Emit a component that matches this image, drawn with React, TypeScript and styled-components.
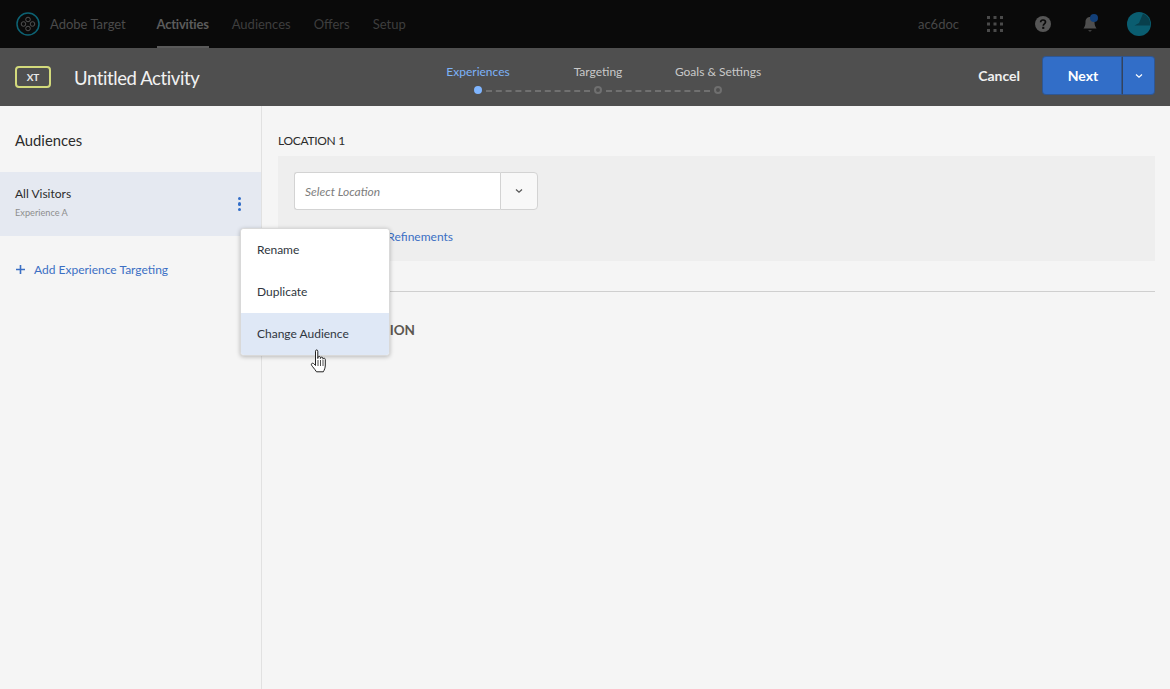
import React from "react";
import styled, { createGlobalStyle } from "styled-components";

const Global = createGlobalStyle`
  html, body { margin: 0; padding: 0; height: 100%; background: #f5f5f5; }
  body { font-family: "Lato", "Open Sans", "Liberation Sans", sans-serif; overflow: hidden; }
  * { box-sizing: border-box; }
`;

const Page = styled.div`
  width: 1170px; height: 689px; display: flex; flex-direction: column; position: relative; overflow: hidden; background: #f5f5f5;
`;
const TopNav = styled.header`
  height: 48px; background: #0a0a0a; display: flex; align-items: stretch; padding-left: 16px; flex: none;
`;
const Brand = styled.div`
  display: flex; align-items: center; gap: 10px; font-size: 13px; color: #4b4b4b; width: 140.500px;
`;
const NavItem = styled.div<{ $active?: boolean }>`
  display: flex; align-items: center; font-size: 13px; height: 48px;
  margin-right: 23px; padding-top: 1px;
  font-weight: ${p => (p.$active ? 700 : 400)};
  letter-spacing: ${p => (p.$active ? "-0.2px" : "0")};
  color: ${p => (p.$active ? "#5c5c5c" : "#3e3e3e")};
  border-bottom: 2px solid ${p => (p.$active ? "#5a5a5a" : "transparent")};
`;
const NavRight = styled.div`
  margin-left: auto; display: flex; align-items: center; padding-right: 19px;
`;
const OrgName = styled.span`
  font-size: 13px; color: #474747; margin-right: 28px;
`;
const IconBox = styled.span<{ $mr: number }>`
  display: flex; margin-right: ${p => p.$mr}px;
`;
const ActionBar = styled.div`
  height: 58px; background: #4f4f4f; display: flex; align-items: center; padding: 0 15px; position: relative; flex: none;
`;
const TypeBadge = styled.div`
  width: 36px; height: 22px; border: 2px solid #d3da7c; border-radius: 4px; font-size: 10px; font-weight: 700;
  color: #e8e8e8; display: flex; align-items: center; justify-content: center; margin-right: 23px;
`;
const Title = styled.div`
  font-size: 18.500px; letter-spacing: -0.400px; color: #f2f2f2; padding-top: 2px;
`;
const Steps = styled.div`
  position: absolute; left: 418px; top: 15px; display: grid; grid-template-columns: repeat(3, 120px);
`;
const Step = styled.div<{ $active?: boolean }>`
  display: flex; flex-direction: column; align-items: center; position: relative;
  font-size: 12px; line-height: 18px;
  color: ${p => (p.$active ? "#7db2f8" : "#c9c9c9")};
`;
const Dot = styled.i<{ $active?: boolean }>`
  display: block; width: 8px; height: 8px; border-radius: 50%; margin-top: 5px;
  background: ${p => (p.$active ? "#7fb5ff" : "transparent")};
  border: 2px solid ${p => (p.$active ? "#7fb5ff" : "#6f6f6f")};
`;
const Dash = styled.i`
  position: absolute; left: 68px; top: 27px; width: 104px; height: 0; border-top: 2px dashed #707070;
`;
const Actions = styled.div`
  margin-left: auto; display: flex; align-items: center; padding-bottom: 3px;
`;
const Cancel = styled.span`
  font-size: 14px; font-weight: 700; color: #f0f0f0; margin-right: 22px;
`;
const NextBtn = styled.div`
  width: 80px; height: 39px; background: #326ec8; border: 1px solid #2a2a2a55; border-radius: 4px 0 0 4px; color: #fff;
  font-size: 14px; font-weight: 700; display: flex; align-items: center; justify-content: center; padding-left: 2px;
`;
const NextCaret = styled.div`
  width: 33px; height: 39px; background: #326ec8; border: 1px solid #2a2a2a55; border-left: 1px solid #34435c;
  border-radius: 0 4px 4px 0; display: flex; align-items: center; justify-content: center;
`;
const Body = styled.div`
  flex: 1; display: flex; min-height: 0;
`;
const Sidebar = styled.aside`
  width: 262px; border-right: 1px solid #e1e1e1; flex: none; padding-top: 25px;
`;
const SideTitle = styled.div`
  font-size: 14.800px; color: #2c2c2c; padding-left: 15px; line-height: 18px; margin-bottom: 23px;
`;
const AudienceRow = styled.div`
  height: 64px; background: #e5e9f1; padding: 13px 15px 0; position: relative; display: flex; justify-content: space-between;
`;
const AudienceName = styled.div`
  font-size: 12px; color: #2c2c2c; line-height: 17px;
`;
const AudienceSub = styled.div`
  font-size: 9.200px; color: #8e8e8e; line-height: 14px; margin-top: 4px;
`;
const Kebab = styled.span`
  margin: 12px 4px 0 0; width: 4px; display: flex; flex-direction: column; gap: 2px;
  i { display: block; width: 3.400px; height: 3.400px; border-radius: 50%; background: #326ec8; }
`;
const AddTarget = styled.div`
  display: flex; align-items: center; gap: 9px; padding: 25px 0 0 16px; font-size: 12px; color: #3b6fc4; line-height: 17px;
`;
const Main = styled.main`
  flex: 1; padding: 26px 15px 0 16px;
`;
const SectionLabel = styled.div`
  font-size: 12px; letter-spacing: -0.300px; color: #2c2c2c; line-height: 17px;
`;
const LocationCard = styled.div`
  background: #eeeeee; height: 105px; margin-top: 7px; padding: 16px;
`;
const SelectRow = styled.div`
  display: flex; width: 244px; height: 38px;
`;
const SelectInput = styled.div`
  flex: 1; background: #fff; border: 1px solid #d3d3d3; border-right: 0; border-radius: 3px 0 0 3px; font-size: 12px; font-style: italic;
  color: #7d7d7d; display: flex; align-items: center; padding-left: 10px;
`;
const SelectCaret = styled.div`
  width: 38px; background: #f8f8f8; border: 1px solid #d3d3d3; border-radius: 0 4px 4px 0; display: flex; align-items: center; justify-content: center;
`;
const RefineLink = styled.div`
  font-size: 12px; color: #3b6fc4; line-height: 17px; margin: 18px 0 0 -16px; text-align: right; width: 175px;
`;
const Rule = styled.hr`
  border: 0; border-top: 1px solid #cfcfcf; margin: 30px 0 0;
`;
const AddLocation = styled.div`
  font-size: 13.500px; font-weight: 700; color: #5c5851; margin-top: 29px; line-height: 18px; display: flex; justify-content: flex-end; width: 137px;
`;
const Menu = styled.div`
  position: absolute; left: 240px; top: 228px; width: 150px; height: 128px; background: #fff; border: 1px solid #d9d9d9;
  border-radius: 4px; box-shadow: 0 1px 4px rgba(0,0,0,0.25); overflow: hidden;
`;
const MenuItem = styled.div<{ $hover?: boolean }>`
  height: 42px; display: flex; align-items: center; padding-left: 16px; padding-bottom: 1px; font-size: 12px; color: #2f3640;
  background: ${p => (p.$hover ? "#dfe8f6" : "#fff")};
`;
const Cursor = styled.svg`
  position: absolute; left: 310px; top: 349px;
`;

const Logo = () => (
  <svg width="24" height="24" viewBox="0 0 24 24" fill="none">
    <circle cx="12" cy="12" r="11" stroke="#0d6273" strokeWidth="1.500" />
    <g stroke="#5a5a5a" strokeWidth="0.900">
      <circle cx="12" cy="7.500" r="2.300" />
      <circle cx="12" cy="16.500" r="2.300" />
      <circle cx="7.500" cy="12" r="2.300" />
      <circle cx="16.500" cy="12" r="2.300" />
    </g>
  </svg>
);
const Grid = () => (
  <svg width="16" height="16" viewBox="0 0 16 16" fill="#4a4a4a">
    {[0, 1, 2].flatMap(r => [0, 1, 2].map(c => <rect key={`${r}${c}`} x={c * 6.500} y={r * 6.500} width="3" height="3" />))}
  </svg>
);
const Help = () => (
  <svg width="16" height="16" viewBox="0 0 16 16">
    <circle cx="8" cy="8" r="8" fill="#565656" />
    <path d="M5.600 6.200C5.700 4.700 6.800 4 8 4c1.400 0 2.500.8 2.500 2.100 0 1.900-2.200 1.800-2.200 3.600" fill="none" stroke="#0a0a0a" strokeWidth="1.700" />
    <rect x="7.200" y="10.800" width="2.100" height="2.100" fill="#0a0a0a" />
  </svg>
);
const Bell = () => (
  <svg width="18" height="20" viewBox="0 0 18 20">
    <path d="M9 3c3 0 4.500 2.300 4.500 5 0 3.500 1 5 2 6.500H2.500c1-1.500 2-3 2-6.500C4.500 5.300 6 3 9 3z" fill="#4f4f4f" />
    <path d="M7 16.200h4L9 17.800z" fill="#4f4f4f" />
    <circle cx="13" cy="4" r="4" fill="#123f78" />
  </svg>
);
const Avatar = () => (
  <svg width="24" height="24" viewBox="0 0 24 24">
    <circle cx="12" cy="12" r="12" fill="#0a5d70" />
    <path d="M12 11L16 1.500A11 11 0 0 1 23 13.500H7.500z" fill="#083f4c" />
  </svg>
);
const Chevron = ({ color }: { color: string }) => (
  <svg width="8" height="6" viewBox="0 0 8 6" fill="none">
    <path d="M1 1.500L4 4.300 7 1.500" stroke={color} strokeWidth="1.200" />
  </svg>
);

export default function App() {
  return (
    <Page>
      <Global />
      <TopNav>
        <Brand><Logo />Adobe Target</Brand>
        <NavItem $active>Activities</NavItem>
        <NavItem>Audiences</NavItem>
        <NavItem>Offers</NavItem>
        <NavItem>Setup</NavItem>
        <NavRight>
          <OrgName>ac6doc</OrgName>
          <IconBox $mr={32}><Grid /></IconBox>
          <IconBox $mr={30}><Help /></IconBox>
          <IconBox $mr={28}><Bell /></IconBox>
          <IconBox $mr={0}><Avatar /></IconBox>
        </NavRight>
      </TopNav>
      <ActionBar>
        <TypeBadge>XT</TypeBadge>
        <Title>Untitled Activity</Title>
        <Steps>
          <Step $active>Experiences<Dot $active /><Dash /></Step>
          <Step>Targeting<Dot /><Dash /></Step>
          <Step>Goals &amp; Settings<Dot /></Step>
        </Steps>
        <Actions>
          <Cancel>Cancel</Cancel>
          <NextBtn>Next</NextBtn>
          <NextCaret><Chevron color="#ffffff" /></NextCaret>
        </Actions>
      </ActionBar>
      <Body>
        <Sidebar>
          <SideTitle>Audiences</SideTitle>
          <AudienceRow>
            <div>
              <AudienceName>All Visitors</AudienceName>
              <AudienceSub>Experience A</AudienceSub>
            </div>
            <Kebab><i /><i /><i /></Kebab>
          </AudienceRow>
          <AddTarget>
            <svg width="9" height="9" viewBox="0 0 9 9"><path d="M3.700 0h1.600v3.700H9v1.600H5.300V9H3.700V5.300H0V3.700h3.700z" fill="#3b6fc4" /></svg>
            Add Experience Targeting
          </AddTarget>
        </Sidebar>
        <Main>
          <SectionLabel>LOCATION 1</SectionLabel>
          <LocationCard>
            <SelectRow>
              <SelectInput>Select Location</SelectInput>
              <SelectCaret><Chevron color="#555555" /></SelectCaret>
            </SelectRow>
            <RefineLink>Add Content Refinements</RefineLink>
          </LocationCard>
          <Rule />
          <AddLocation>ADD LOCATION</AddLocation>
        </Main>
      </Body>
      <Menu>
        <MenuItem>Rename</MenuItem>
        <MenuItem>Duplicate</MenuItem>
        <MenuItem $hover>Change Audience</MenuItem>
      </Menu>
      <Cursor width="20" height="26" viewBox="0 0 20 26">
        <path d="M5.500 2.200c0-1.700 2.300-1.700 2.300 0v7.300l.3-1.200c.3-1.300 2.200-1.200 2.300.2v1l.3-.7c.4-1.100 2.100-.9 2.200.4v1l.3-.4c.5-.9 2.100-.6 2.100.7v5.500c0 3-1 5-2 6.800H6.500c-.9-1.500-2.400-3.200-3.800-5-.8-1-1.700-2.100-1.200-3 .6-.9 1.900-.6 2.700.2l1.300 1.500z" fill="#fff" stroke="#222" strokeWidth="1" strokeLinejoin="round" />
        <path d="M8 11v6M10.500 11v6M13 11v6" stroke="#222" strokeWidth=".8" />
      </Cursor>
    </Page>
  );
}
